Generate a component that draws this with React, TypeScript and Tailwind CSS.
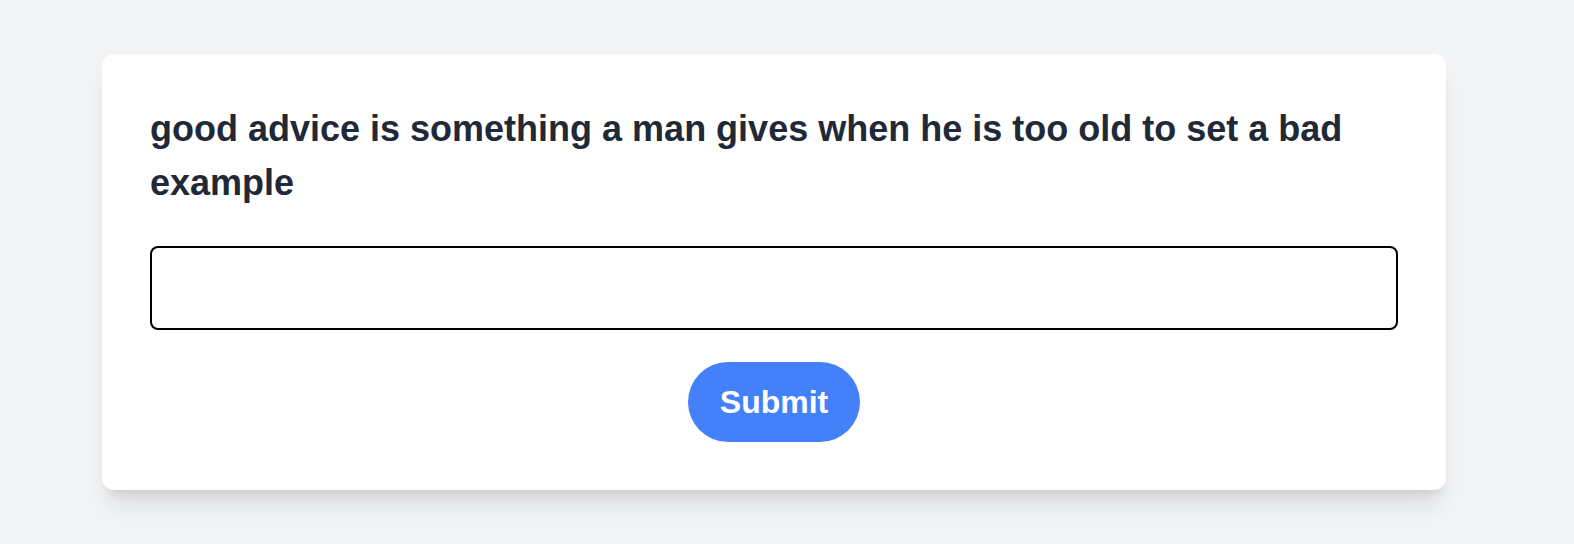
import { useState } from 'react'

export default function App() {
  const [answer, setAnswer] = useState('')

  return (
    <div className="min-h-screen bg-[#f3f4f6] pl-[102px] pt-[54px] font-['Liberation_Sans',Arial,sans-serif]">
      {/* Quote card */}
      <div className="w-[1344px] bg-white rounded-xl shadow-xl p-12">
        <h2 className="text-[36px] leading-[54px] font-bold text-[#1f2937] mb-9">
          good advice is something a man gives when he is too old to set a bad example
        </h2>

        <input
          type="text"
          value={answer}
          onChange={(e) => setAnswer(e.target.value)}
          className="block w-full border-2 border-black rounded-lg p-4 text-[32px] leading-[48px] text-[#1f2937] outline-none"
        />

        <div className="flex justify-center mt-8">
          <button className="bg-[#4480f9] text-white font-bold text-[32px] leading-[48px] px-8 py-4 rounded-full cursor-pointer">
            Submit
          </button>
        </div>
      </div>
    </div>
  )
}
